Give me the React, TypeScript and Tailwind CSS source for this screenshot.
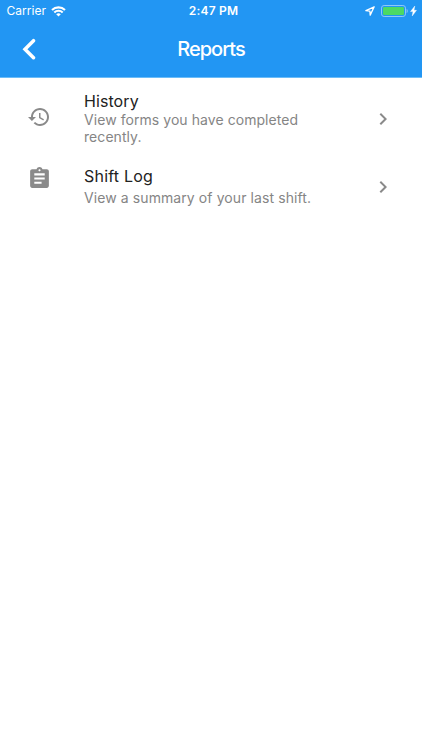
import React from "react";

const HISTORY =
  "M13 3c-4.97 0-9 4.03-9 9H1l3.89 3.89.07.14L9 12H6c0-3.87 3.13-7 7-7s7 3.13 7 7-3.13 7-7 7c-1.93 0-3.68-.79-4.94-2.06l-1.42 1.42C8.27 19.99 10.51 21 13 21c4.97 0 9-4.03 9-9s-4.03-9-9-9zm-1 5v5l4.28 2.54.72-1.21-3.5-2.08V8H12z";
const ASSIGNMENT =
  "M19 3h-4.18C14.4 1.84 13.3 1 12 1c-1.3 0-2.4.84-2.82 2H5c-1.1 0-2 .9-2 2v14c0 1.1.9 2 2 2h14c1.1 0 2-.9 2-2V5c0-1.1-.9-2-2-2zm-7 0c.55 0 1 .45 1 1s-.45 1-1 1-1-.45-1-1 .45-1 1-1zm2 14H7v-2h7v2zm3-4H7v-2h10v2zm0-4H7V7h10v2z";
const CHEVRON = "M10 6L8.59 7.41 13.17 12l-4.58 4.59L10 18l6-6z";

function Icon({ d, className }: { d: string; className: string }) {
  return (
    <svg viewBox="0 0 24 24" fill="currentColor" className={`shrink-0 text-[#8a8a8a] ${className}`}>
      <path d={d} />
    </svg>
  );
}

function StatusBar() {
  return (
    <div className="grid h-[22px] grid-cols-3 items-center text-[12px] leading-[22px]">
      <div className="flex items-center gap-[5px] pl-[6.5px]">
        <span className="tracking-[0.05px]">Carrier</span>
        <svg viewBox="0 0 15 11" className="h-[11px] w-[15px]" fill="none" stroke="currentColor" strokeWidth="2.1">
          <path d="M1 4.1a9.2 9.2 0 0 1 13 0" />
          <path d="M3.3 6.5a6 6 0 0 1 8.4 0" />
          <path d="M7.5 10.6 5.2 8.3a3.3 3.3 0 0 1 4.6 0z" fill="currentColor" stroke="none" />
        </svg>
      </div>
      <div className="pl-[5px] text-center font-semibold tracking-[0.2px]">2:47 PM</div>
      <div className="flex items-center justify-end pr-[5px]">
        <svg viewBox="0 0 10 10" className="mr-[6px] h-[10px] w-[10px]" fill="none" stroke="currentColor" strokeWidth="1.3" strokeLinejoin="round">
          <path d="M9.2.8.9 4.7l4 .4.3 4z" />
        </svg>
        <svg viewBox="0 0 27 12" className="h-[12px] w-[27px]">
          <rect x=".5" y=".5" width="24" height="11" rx="2.6" fill="none" stroke="#8fc8f9" />
          <rect x="2" y="2" width="21" height="8" rx="1.3" fill="#4cd964" />
          <path d="M25.6 4v4c.8-.3 1.1-1.1 1.1-2s-.3-1.7-1.1-2z" fill="#8fc8f9" />
        </svg>
        <svg viewBox="0 0 6 10" className="ml-[2px] h-[10px] w-[7px]" fill="currentColor" stroke="currentColor" strokeWidth=".4">
          <path d="M4.3 0 0 5.6h2.5L1.7 10 6 4.3H3.5z" />
        </svg>
      </div>
    </div>
  );
}

export default function App() {
  return (
    <div className="h-[750px] w-[422px] overflow-hidden bg-white font-['Inter','Liberation_Sans',sans-serif]">
      <header className="h-[78px] border-b border-[#6bbcf8] bg-[#2296f3] text-white">
        <StatusBar />
        <div className="grid h-[54px] grid-cols-[60px_1fr_60px] items-center">
          <svg viewBox="0 0 14 22" className="ml-[22px] h-[22px] w-[14px]" fill="none" stroke="currentColor" strokeWidth="3.5" strokeLinecap="round">
            <path d="M11.5 2.7 3 11.2l8.5 8.5" />
          </svg>
          <h1 className="text-center text-[20px] leading-[24px] font-medium tracking-[-0.98px]">Reports</h1>
        </div>
      </header>
      <main>
        <div className="flex h-[75px] pr-[27px] pl-[27px]">
          <Icon d={HISTORY} className="mt-[26.5px] h-6 w-6" />
          <div className="ml-[33px] w-[240px] pt-[13px]">
            <div className="text-[16px] leading-[20px] tracking-[0.08px] text-[#222]">History</div>
            <div className="text-[14px] leading-[17px] tracking-[0.06px] text-[#858585]">
              View forms you have completed recently.
            </div>
          </div>
          <Icon d={CHEVRON} className="mt-[29px] ml-auto h-6 w-6" />
        </div>
        <div className="flex h-[68px] pr-[27px] pl-[26.5px]">
          <Icon d={ASSIGNMENT} className="mt-[12.5px] h-[25px] w-[25px]" />
          <div className="ml-[32.5px] w-[240px] pt-[13px]">
            <div className="text-[16px] leading-[20px] tracking-[0.2px] text-[#222]">Shift Log</div>
            <div className="mt-[2px] text-[14px] leading-[20px] tracking-[0.09px] text-[#858585]">
              View a summary of your last shift.
            </div>
          </div>
          <Icon d={CHEVRON} className="mt-[22px] ml-auto h-6 w-6" />
        </div>
      </main>
    </div>
  );
}
